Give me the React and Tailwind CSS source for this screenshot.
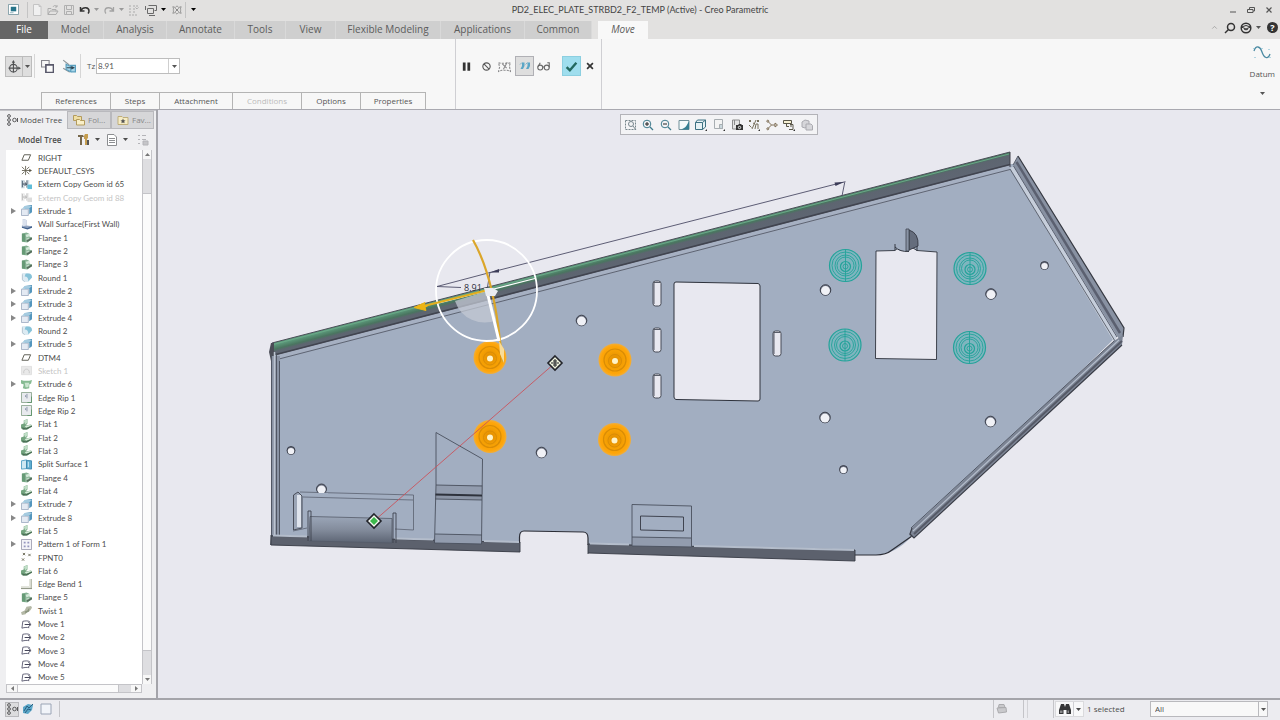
import React, { useState } from 'react';

const MENU = [
    { label: 'Model', width: 'w-[56px]' },
    { label: 'Analysis', width: 'w-[63px]' },
    { label: 'Annotate', width: 'w-[68px]' },
    { label: 'Tools', width: 'w-[51px]' },
    { label: 'View', width: 'w-[50px]' },
    { label: 'Flexible Modeling', width: 'w-[105px]' },
    { label: 'Applications', width: 'w-[84px]' },
    { label: 'Common', width: 'w-[67px]' },
];

const PANELS = [
    { label: 'References', width: 'w-[69px]' },
    { label: 'Steps', width: 'w-[49px]' },
    { label: 'Attachment', width: 'w-[73px]' },
    { label: 'Conditions', width: 'w-[69px]', disabled: true },
    { label: 'Options', width: 'w-[59px]' },
    { label: 'Properties', width: 'w-[66px]' },
];

const TREE = [
    ['plane', 'RIGHT'],
    ['csys', 'DEFAULT_CSYS'],
    ['copy', 'Extern Copy Geom id 65'],
    ['copy', 'Extern Copy Geom id 88', 'off'],
    ['extrude', 'Extrude 1', 'open'],
    ['wall', 'Wall Surface(First Wall)'],
    ['flange', 'Flange 1'],
    ['flange', 'Flange 2'],
    ['flange', 'Flange 3'],
    ['round', 'Round 1'],
    ['extrude', 'Extrude 2', 'open'],
    ['extrude', 'Extrude 3', 'open'],
    ['extrude', 'Extrude 4', 'open'],
    ['round', 'Round 2'],
    ['extrude', 'Extrude 5', 'open'],
    ['plane', 'DTM4'],
    ['sketch', 'Sketch 1', 'off'],
    ['cut', 'Extrude 6', 'open'],
    ['rip', 'Edge Rip 1'],
    ['rip', 'Edge Rip 2'],
    ['flat', 'Flat 1'],
    ['flat', 'Flat 2'],
    ['flat', 'Flat 3'],
    ['split', 'Split Surface 1'],
    ['flange', 'Flange 4'],
    ['flat', 'Flat 4'],
    ['extrude', 'Extrude 7', 'open'],
    ['extrude', 'Extrude 8', 'open'],
    ['flat', 'Flat 5'],
    ['pattern', 'Pattern 1 of Form 1', 'open'],
    ['points', 'FPNT0'],
    ['flat', 'Flat 6'],
    ['bend', 'Edge Bend 1'],
    ['flange', 'Flange 5'],
    ['twist', 'Twist 1'],
    ['move', 'Move 1'],
    ['move', 'Move 2'],
    ['move', 'Move 3'],
    ['move', 'Move 4'],
    ['move', 'Move 5'],
];

// 12x12 glyphs, drawn with the text colour unless a colour is given
const GLYPHS = {
    plane: <path d="M3.500 3h7l-2.500 6h-7z" stroke="#55554a" />,
    csys: (
        <g stroke="#5b5748" strokeWidth="0.900">
            <path d="M5 1v10M1 6h9M1 2l3 3M1 10l3-3M6 5l3-3M6 7l3 3" />
            <path d="M9 4l3 2-3 2z" fill="#5b5748" stroke="none" />
        </g>
    ),
    copy: (
        <g>
            <path d="M0 1h4v9H0zM6 1h3v5H6z" fill="#cfdae2" stroke="none" />
            <path d="M1.500 2v7M6.500 1.500v8" stroke="#46596b" />
            <path d="M2 5.500h4M4 3.500l2 2-2 2" stroke="#28374a" />
            <path d="M7 6h5v5H7z" fill="#5fbcd8" stroke="none" />
        </g>
    ),
    extrude: (
        <g stroke="none">
            <path d="M4 1l8-1v8l-3 2V4H4z" fill="#5496bd" />
            <path d="M.5 4.500h7.500v7H.5z" fill="#e4eaf3" stroke="#a3b0c4" />
            <path d="M1 4l3-3h8L8.500 4z" fill="#a5cbe0" />
        </g>
    ),
    wall: (
        <g stroke="none">
            <path d="M2 0l4 1v6l6 1v1l-5 2-6-2V7h1z" fill="#91a3c0" />
            <path d="M2 0l4 1v6l-4 1z" fill="#dbe2ee" />
            <path d="M1 8.500l6 1.200 5-1.700v1.500L7 11.500l-6-2z" fill="#41618c" />
        </g>
    ),
    flange: (
        <g stroke="none">
            <path d="M1 1.500L6 .5 9 2v3l3 1v2l-5 3.500-6-1z" fill="#87b294" />
            <path d="M1 2h3.500v8.500L1 10z" fill="#669a76" />
            <path d="M5 3l4-1v2.500L6 6z" fill="#d2e8d8" />
            <path d="M6 8.500L12 6v2l-5 3z" fill="#566d5d" />
            <path d="M5.500 7l3.500-1v1.500L6 8.700z" fill="#bcd9c4" />
        </g>
    ),
    round: (
        <g stroke="none">
            <path d="M1 1h6c4 0 5 2 5 5l-4 5H4L1 9z" fill="#dcebf3" />
            <path d="M5 2c5-1 7 1 7 4L8 10c0-3-1-5-4-5z" fill="#86c2d8" />
            <path d="M1.500 2.500v6L4 10.500" stroke="#b5c3ce" />
        </g>
    ),
    sketch: (
        <g>
            <path d="M.5 1.500h11v9H.5z" fill="#c9c9cc" stroke="#b0b0b4" />
            <path d="M3 9c-1-6 7-6 6 0" stroke="#777" />
        </g>
    ),
    cut: (
        <g stroke="none">
            <path d="M0 1l3 1h6l3-1-1 4-2 1v4l-4 1-3-1 1-4-3-1z" fill="#86ba92" />
            <path d="M4 4h5L8 9H5z" fill="#cbe5d0" />
        </g>
    ),
    rip: (
        <g>
            <path d="M.5.500h11v11H.5z" fill="#e8eaee" stroke="#8ea692" />
            <path d="M6.500 2v5M5 3.500v2" stroke="#8791a4" />
            <path d="M11.500 5v6.500H7" stroke="#5d9468" />
        </g>
    ),
    flat: (
        <g stroke="none">
            <path d="M3 1.500L7 0v5L5 7l6-1 1 2-5 3.500H2L0 10V6l3-1z" fill="#73a47f" />
            <path d="M3 2l4-2v4L4.500 6z" fill="#c0dec7" />
            <path d="M4 8l5-1.500L12 7 6 9.500z" fill="#d6ead9" />
            <path d="M1 9l4 1 7-3v1.500L6 11.500H2z" fill="#4b6e56" />
        </g>
    ),
    split: (
        <g>
            <path d="M.5 2L6 1v9.500L.5 11z" fill="#cfe8f2" stroke="#52a0c4" />
            <path d="M6 1.500l5.500.5v9L6 10.500z" fill="#5faed0" stroke="#3c88b0" />
            <path d="M8 3v6" stroke="#d8eef7" />
        </g>
    ),
    pattern: (
        <g>
            <path d="M.5.500h11v11H.5z" fill="#f4f4f8" stroke="#a0a0b2" />
            <path d="M3 3h2v2H3zM7 3h2v2H7zM3 7h2v2H3zM7 7h2v2H7z" fill="#9595be" stroke="none" />
        </g>
    ),
    points: <path d="M2 1l2.500 2.500M4.500 1L2 3.500M8 2l2.500 2.500M10.500 2L8 4.500M1 7l2.500 2.500M3.500 7L1 9.500" stroke="#6b6a55" />,
    bend: (
        <g stroke="none">
            <path d="M9 0h3v11H0V8h9z" fill="#b9bdb0" />
            <path d="M9 0h1.500v9.500H0V8h9z" fill="#ecede6" />
            <path d="M0 10h12v1H0z" fill="#8d9382" />
        </g>
    ),
    twist: (
        <g stroke="none">
            <path d="M0 8l4-2 2-4 5-1 1 2-2 3-3 1-2 3-4 1z" fill="#b4b8a6" />
            <path d="M4 7l3-1 2-3v4L5 9z" fill="#8b957f" />
        </g>
    ),
    move: (
        <g stroke="#5c5c72">
            <path d="M10 3.500C8 1.500 5 2 2 2.500L1 10c3-1 6-1 8-.5" />
            <path d="M4 6h6M8 3.500L11 6 8 8.500" stroke="#33334a" />
        </g>
    ),
    branch: (
        <g stroke="#5a5a5c">
            <circle cx="3" cy="2" r="1.400" />
            <circle cx="3" cy="6" r="1.400" />
            <circle cx="3" cy="10" r="1.400" />
            <circle cx="8.500" cy="6" r="1.800" />
            <path d="M11.500 4v4" />
        </g>
    ),
    folders: (
        <g stroke="#b39b5c">
            <path d="M.5 1.500h3l1 1h4v4h-8z" fill="#f0dfa4" />
            <path d="M3.500 5.500h3l1 1h4v4.500h-8z" fill="#f9efc8" />
        </g>
    ),
    favs: (
        <g>
            <path d="M1 2.500h4l1 1h5v7H1z" fill="#f6ecc4" stroke="#bfae7a" />
            <path d="M6 4.500l.8 1.700 1.700.2-1.300 1.100.4 1.700L6 8.400l-1.600.8.4-1.700-1.300-1.100 1.700-.2z" fill="#555" stroke="none" />
        </g>
    ),
    tools: (
        <g stroke="none">
            <path d="M0 1h5l1 2H4v8H2V3H0z" fill="#77674a" />
            <path d="M7 0h3v4l-1 1v6H7V5H6V2z" fill="#c59d4e" />
            <path d="M9 6h2v5H9z" fill="#555" />
        </g>
    ),
    page: (
        <g stroke="#8b8d90">
            <path d="M1.500.500H8l2.500 2.500v8.500h-9z" fill="#fff" />
            <path d="M3 4.500h6M3 6.500h6M3 8.500h6" />
        </g>
    ),
    filter: (
        <g stroke="#b4b4b8">
            <path d="M1 1.500h2M1 5.500h2M1 9.500h2M5 1.500h4M5 5.500h4" />
            <path d="M6 7h5v4H6z" fill="#c5c5c8" />
        </g>
    ),
    app: (
        <g>
            <path d="M.5.500h11v11H.5z" fill="#fff" stroke="#7d9aa3" />
            <path d="M3 3h6v5H3z" fill="#26748a" stroke="none" />
            <path d="M2 9.500h4" stroke="#8fb4bd" />
        </g>
    ),
    fileNew: <path d="M2.500.500H8l2 2v9H2.500zM8 .5v2h2" stroke="#c4c4c4" fill="#f0f0f0" />,
    folderOpen: <path d="M1 10.500v-6h3l1 1h4v2M1 10.500l2-3.500h8l-2 3.500zM6 3c1-2 3-2 4 0M10 1v2H8" stroke="#adadad" />,
    save: <path d="M1.500 1.500h9v9h-9zM3.500 1.500v4h5v-4M3.500 10.500v-3h5v3" stroke="#b0b0b0" />,
    undo: <path d="M1.500 3v4h4M2 6.500C4 2.500 10 3 10 7c0 1-.5 2-1 2.500" stroke="#333" strokeWidth="1.500" />,
    redo: <path d="M10.500 3v4h-4M10 6.500C8 2.500 2 3 2 7c0 1 .5 2 1 2.500" stroke="#a3a3a3" strokeWidth="1.300" />,
    regen: <path d="M1 2h3M1 5h3M1 8h3M1 11h9M6 1v8M9 1v4M7.500 3.500L9 5l1.500-1.500" stroke="#aaa" strokeDasharray="2 1" />,
    windows: <path d="M3.500 1.500h8v5h-2M2.500 4.500h6v5h-6zM.5 2v4M4 11.500h6" stroke="#6a6a6a" />,
    closeWin: (
        <g stroke="#777">
            <path d="M4 4l4 4M8 4L4 8" />
            <path d="M1 2l3 1 2-2 2 2 3-1-1 3 1 1-1 1 1 3-3-1-2 2-2-2-3 1 1-3-1-1 1-1z" strokeWidth="0.800" />
        </g>
    ),
    dragger: (
        <g stroke="#4f5052">
            <circle cx="5" cy="7.500" r="3.500" />
            <path d="M5 1v10.500M.5 7.500H10" />
            <path d="M3.500 2.500L5 0l1.500 2.500zM9.500 6l2.500 1.500L9.500 9z" fill="#4f5052" stroke="none" />
        </g>
    ),
    squares: (
        <g stroke="#58586a">
            <path d="M.5.500h7v6h-7z" stroke="#85858c" />
            <path d="M4.500 4.500h7v7h-7z" fill="#fafafa" strokeWidth="1.500" />
        </g>
    ),
    copyFaces: (
        <g>
            <path d="M1 1l5 4v6L1 8" stroke="#8d9498" />
            <path d="M3.500 4.500l4 2v4.500l-4-2zM7.500 5.500h4v5.500h-4z" fill="#a7d6ea" stroke="#5a9fbe" />
            <path d="M4 7.500h5M8 6.500l2 1-2 1" stroke="#2f4552" />
        </g>
    ),
    pause: <path d="M2 1.500h3v9H2zM7 1.500h3v9H7z" fill="#333" stroke="none" />,
    none: (
        <g stroke="#555" strokeWidth="1.200">
            <circle cx="6" cy="6" r="4" />
            <path d="M3.200 3.200l5.600 5.600" />
        </g>
    ),
    verify: (
        <g stroke="#8a8a8c">
            <path d="M.5 2.500l2 .5h7l2-.5-1 3 1 5-3-1h-5l-3 1 1-4z" strokeDasharray="2 1" />
            <path d="M4 3.500l4 4M8.500 2L5 8.500" />
        </g>
    ),
    attach: (
        <g>
            <path d="M3 2.500h2.500V6L4 9H1.500L3 6zM8.500 2.500H11V6L9.500 9H7l1.500-3z" fill="#5ba6c6" stroke="none" />
            <path d="M1 4.500l2-2M6.500 4.500l2-2" stroke="#7db4cc" />
        </g>
    ),
    glasses: (
        <g stroke="#666">
            <circle cx="3" cy="7" r="2.300" />
            <circle cx="9" cy="7" r="2.300" />
            <path d="M1 6l2-3.500M5.300 6.500h1.400M11.300 7V2.500H9.500" />
        </g>
    ),
    check: <path d="M1.500 6.500L4.500 9.500 10.500 2.500" stroke="#23695f" strokeWidth="2.200" />,
    cross: <path d="M2.500 2.500l7 7M9.500 2.500l-7 7" stroke="#333" strokeWidth="2" />,
    refit: (
        <g stroke="#77868c">
            <path d="M.5 1.500h10v9H.5z" strokeDasharray="2 1" />
            <circle cx="6" cy="5" r="2.500" />
            <path d="M8 7l3 4" />
        </g>
    ),
    zoomIn: (
        <g stroke="#3f7b8d">
            <circle cx="5" cy="5" r="3.800" />
            <path d="M3 5h4M5 3v4" stroke="#222" />
            <path d="M8 8l3 3" strokeWidth="1.300" />
        </g>
    ),
    zoomOut: (
        <g stroke="#3f7b8d">
            <circle cx="5" cy="5" r="3.800" />
            <path d="M3 5h4" stroke="#222" />
            <path d="M8 8l3 3" strokeWidth="1.300" />
        </g>
    ),
    repaint: (
        <g>
            <path d="M1 1.500h10v9H1z" fill="#f4fafb" stroke="#6f8f99" />
            <path d="M11 2v8.500H3C8 9 9 6 11 2z" fill="#357f92" stroke="none" />
        </g>
    ),
    shade: (
        <g stroke="#3d7182">
            <path d="M.5 3.500h7v7h-7zM.5 3.500l2-2.500h8v7l-3 2.500M7.500 3.500L10.500 1" fill="#e6f1f4" />
            <path d="M12 10v2h-2z" fill="#333" stroke="none" />
        </g>
    ),
    views: (
        <g stroke="#a7adb1">
            <path d="M1.500.500h8v9h-8z" fill="#f3f3f3" />
            <path d="M6.500 5.500h3v4h-3z" fill="#c9d6db" />
            <path d="M12 10v2h-2z" fill="#333" stroke="none" />
        </g>
    ),
    camera: (
        <g>
            <path d="M1.500 1h7v9h-7z" fill="#e4e4e4" stroke="#8c8c8c" />
            <path d="M3.500 1v5" stroke="#8c8c8c" />
            <path d="M5 6h2l1-1h2l1 1h1v5H5z" fill="#333" stroke="none" />
            <circle cx="8.500" cy="8.500" r="1.200" stroke="#eee" />
        </g>
    ),
    datums: (
        <g stroke="#77705c">
            <path d="M1 1l2 2M3 1L1 3M4 10l4-9M9 1l2 2M11 1L9 3M1 6l2.500 2.500M7 10l1-5h2v5M5 4l2 1" />
            <path d="M12 10v2h-2z" fill="#333" stroke="none" />
        </g>
    ),
    annot: (
        <g stroke="#7f6f56">
            <path d="M2 2.500L5.500 6 2 9.500M5.500 6H9" />
            <path d="M9 4l2.500 2L9 8z" />
            <circle cx="1.800" cy="2.200" r="1" />
            <circle cx="1.800" cy="9.800" r="1" />
        </g>
    ),
    spin: (
        <g stroke="#5a5748">
            <path d="M.5 1.500h8v3h-8zM3.500 4.500v3H6" fill="#f6f0d2" />
            <path d="M7 5.500h3v5H6M8 4v4" />
            <path d="M12 10v2h-2z" fill="#333" stroke="none" />
        </g>
    ),
    ghost: (
        <g fill="#d6d6da" stroke="#aaaab0">
            <path d="M1 3l3-2 4 1v5L4 9 1 8z" />
            <path d="M5 5h5l1.500 1.500V11H5z" />
        </g>
    ),
    globe: (
        <g stroke="none">
            <path d="M1 4l5-3 5 1-1 5-4 4-5-1z" fill="#5aa6c8" />
            <path d="M2 8l3-5 2 2 4-4M3 10l3-4 3 1" stroke="#295f80" />
        </g>
    ),
    box: <path d="M1 1h10v10H1z" fill="#f1f4f9" stroke="#9aa4b5" />,
    print: <path d="M3 1.500h5l1 3H2.500zM1 5l9-.5.5 4.500-8 1z" fill="#c9c9cc" stroke="#ababae" />,
    binoculars: (
        <g stroke="none">
            <path d="M2 1h3l1 3 1-3h3l2 6v4H7.500V7h-3v4H0V7z" fill="#363638" />
            <path d="M1 7.500h2.500v2.500H1zM8.500 7.500H10v2.500H8.500z" fill="#8a8a8c" />
        </g>
    ),
};

function Icon({ name, className = 'size-3' }) {
    return (
        <svg viewBox="0 0 12 12" fill="none" stroke="currentColor" className={`${className} shrink-0`} aria-hidden="true">
            {GLYPHS[name]}
        </svg>
    );
}

function Caret({ className = 'text-[#555]' }) {
    return (
        <svg viewBox="0 0 5 3" className={`h-[3px] w-[5px] shrink-0 ${className}`} aria-hidden="true">
            <path d="M0 0h5L2.500 3z" fill="currentColor" />
        </svg>
    );
}

function IconButton({ name, label, className = '', iconClass }) {
    return (
        <button type="button" aria-label={label} className={`flex items-center justify-center ${className}`}>
            <Icon name={name} className={iconClass} />
        </button>
    );
}

function TitleBar() {
    return (
        <header className="grid h-[21px] grid-cols-[1fr_auto_1fr] items-center bg-[#e2e1e0] pb-[2px]">
            <div className="flex items-center">
                <Icon name="app" className="ml-2 size-[11px]" />
                <span className="ml-2 h-4 w-px bg-[#c4c4c4]" />
                <IconButton name="fileNew" label="New" className="ml-[3px]" />
                <IconButton name="folderOpen" label="Open" className="ml-1" />
                <IconButton name="save" label="Save" className="ml-1" />
                <IconButton name="undo" label="Undo" className="ml-1" />
                <Caret className="ml-[3px] text-[#999]" />
                <IconButton name="redo" label="Redo" className="ml-1" />
                <Caret className="ml-1 text-[#999]" />
                <IconButton name="regen" label="Regenerate" className="ml-1" />
                <IconButton name="windows" label="Windows" className="ml-[5px]" />
                <Caret className="ml-1" />
                <IconButton name="closeWin" label="Close window" className="ml-[6px]" iconClass="size-[10px]" />
                <span className="ml-[3px] h-4 w-px bg-[#c4c4c4]" />
                <Caret className="ml-[5px]" />
            </div>
            <h1 className="font-[Lato,'Noto_Sans',sans-serif] text-[9px] leading-3 text-[#444]">PD2_ELEC_PLATE_STRBD2_F2_TEMP (Active) - Creo Parametric</h1>
            <div className="flex items-center justify-end gap-[10px] pr-[7px] text-[#555]">
                <button type="button" aria-label="Minimize">
                    <svg viewBox="0 0 8 8" className="size-2" stroke="currentColor"><path d="M1 6h6" /></svg>
                </button>
                <button type="button" aria-label="Restore">
                    <svg viewBox="0 0 8 8" className="size-2" fill="none" stroke="currentColor"><path d="M2.500 3V1.500h5V5H6M.5 3.500H6v3H.5z" /></svg>
                </button>
                <button type="button" aria-label="Close">
                    <svg viewBox="0 0 8 8" className="size-2" stroke="currentColor"><path d="M1.500 1.500l5 5M6.500 1.500l-5 5" strokeWidth="1.200" /></svg>
                </button>
            </div>
        </header>
    );
}

function MenuBar() {
    return (
        <nav className="flex h-[18px] items-stretch bg-[#e2e1e0] text-[10px] leading-4 text-[#5c5c5c]">
            <button type="button" className="w-12 bg-[#666] pb-[2px] text-white">File</button>
            <div className="flex bg-[#cfcfcf]">
                {MENU.map((item) => (
                    <button key={item.label} type="button" className={`border-r border-[#d9d9d9] pb-[2px] ${item.width}`}>{item.label}</button>
                ))}
            </div>
            <button type="button" className="ml-[6px] w-[50px] bg-[#f8f8f8] pb-[2px] italic">Move</button>
            <div className="ml-auto flex items-center gap-1 pb-[5px] pr-[2px] text-[#333]">
                <svg viewBox="0 0 8 4" className="h-[3px] w-[7px]" fill="none" stroke="#999"><path d="M1 3.500L4 .5l3 3" /></svg>
                <button type="button" aria-label="Search" className="ml-[2px]">
                    <svg viewBox="0 0 12 12" className="size-3" fill="none" stroke="currentColor" strokeWidth="1.500"><circle cx="7" cy="5" r="3.500" /><path d="M4.500 7.500L1 11" /></svg>
                </button>
                <button type="button" aria-label="Learning">
                    <svg viewBox="0 0 12 12" className="size-3" fill="none" stroke="currentColor" strokeWidth="1.500"><circle cx="6" cy="6" r="4.800" /><path d="M1.500 5L6 3.500 10.500 5 6 7zM4 7c1 1 3 1 4 0" strokeWidth="1" /></svg>
                </button>
                <Caret />
                <button type="button" aria-label="Help" className="ml-[2px] flex size-[11px] items-center justify-center rounded-full bg-[#333] text-[9px] font-bold leading-[10px] text-white">?</button>
            </div>
        </nav>
    );
}

function Ribbon() {
    return (
        <section className="flex h-[71px] border-b border-[#a9a9b0] bg-[#f7f7f7] text-[8px] leading-3 text-[#555]">
            <div className="flex w-[456px] flex-col justify-between border-r border-[#cfcfd3]">
                <div className="flex items-center pl-[5px] pt-[15px]">
                    <button type="button" aria-label="Dragger" className="flex h-[21px] w-[27px] items-center border border-[#bcbcbc] bg-[#dedede]">
                        <span className="flex h-full w-[17px] items-center justify-center border-r border-[#bcbcbc]">
                            <Icon name="dragger" className="size-[13px]" />
                        </span>
                        <Caret className="ml-[2px]" />
                    </button>
                    <span className="ml-[2px] h-6 w-px bg-[#d6d6d6]" />
                    <IconButton name="squares" label="Copy" className="ml-[6px]" iconClass="size-[13px]" />
                    <IconButton name="copyFaces" label="Keep original" className="ml-2" iconClass="size-[14px]" />
                    <span className="ml-1 h-6 w-px bg-[#d6d6d6]" />
                    <label htmlFor="tz" className="ml-[6px] w-[9px]">Tz</label>
                    <div className="flex h-4 w-[84px] border border-[#bdbdbd] bg-white">
                        <input id="tz" defaultValue="8.91" className="min-w-0 flex-1 px-px font-[Lato,'Noto_Sans',sans-serif] text-[8px] outline-none" />
                        <button type="button" aria-label="Recent values" className="flex w-[11px] items-center justify-center border-l border-[#cfcfcf]">
                            <Caret />
                        </button>
                    </div>
                </div>
                <div className="flex pl-[41px]">
                    {PANELS.map((p) => (
                        <button
                            key={p.label}
                            type="button"
                            disabled={p.disabled}
                            className={`h-[17px] border-l border-t border-[#b4b4b4] last:border-r disabled:text-[#bbb] ${p.width}`}
                        >
                            {p.label}
                        </button>
                    ))}
                </div>
            </div>
            <div className="flex w-[146px] items-start border-r border-[#cfcfd3] pl-1 pt-[17px]">
                <IconButton name="pause" label="Pause" className="h-5 w-3" iconClass="size-[11px]" />
                <IconButton name="none" label="No preview" className="ml-2 h-5 w-3" iconClass="size-[11px]" />
                <IconButton name="verify" label="Verify" className="ml-[6px] h-5 w-3" iconClass="size-[13px]" />
                <IconButton name="attach" label="Attached preview" className="ml-[5px] h-5 w-[19px] border border-[#b0b0b5] bg-[#dedede]" />
                <IconButton name="glasses" label="Preview" className="ml-[3px] h-5 w-3" iconClass="size-[13px]" />
                <IconButton name="check" label="Accept" className="ml-[13px] h-5 w-[19px] border border-[#8ccfe0] bg-[#9fdeee]" iconClass="size-[13px]" />
                <IconButton name="cross" label="Cancel" className="ml-[3px] h-5 w-3" iconClass="size-[10px]" />
            </div>
            <button type="button" className="ml-auto mr-[5px] flex flex-col items-center pt-[7px]">
                <svg viewBox="0 0 20 14" className="h-[14px] w-5" fill="none">
                    <path d="M2 5C4-1 8 0 10 6s6 8 8 2" stroke="#4d8ba3" strokeWidth="1.300" />
                    <path d="M2 2v1M17 3v1M3 11v1M10 2v1M18 11v1" stroke="#6db3cc" />
                </svg>
                <span className="mt-2">Datum</span>
                <Caret className="mt-3" />
            </button>
        </section>
    );
}

function TreeRow({ icon, label, state }) {
    return (
        <li className={`flex min-h-0 flex-1 items-center ${state === 'off' ? 'text-[#c4c4c4]' : ''}`}>
            <span className="flex w-[15px] justify-center">
                {state === 'open' && (
                    <button type="button" aria-label={`Expand ${label}`}>
                        <svg viewBox="0 0 5 6" className="h-[6px] w-[5px]"><path d="M0 0l5 3-5 3z" fill="#888" /></svg>
                    </button>
                )}
            </span>
            <Icon name={icon} className={state === 'off' ? 'size-[11px] opacity-40 grayscale' : 'size-[11px]'} />
            <span className="ml-[6px] whitespace-nowrap">{label}</span>
        </li>
    );
}

function Sidebar() {
    return (
        <aside className="flex w-[158px] shrink-0 flex-col border-r-2 border-[#a4a4aa] bg-[#efeff1] text-[8px] leading-3 text-[#4c4c4c]">
            <div className="flex h-[19px] border-t border-[#c4c4c8]">
                <button type="button" className="flex w-[67px] items-center gap-[2px] whitespace-nowrap pl-[6px]">
                    <Icon name="branch" />
                    Model Tree
                </button>
                <button type="button" className="flex w-[44px] items-center gap-[3px] border border-[#b9b9bd] bg-[#d6d6d8] pl-[5px] text-[#888]">
                    <Icon name="folders" />
                    Fol...
                </button>
                <button type="button" className="flex w-[43px] items-center gap-[3px] border border-[#b9b9bd] bg-[#d6d6d8] pl-[5px] text-[#888]">
                    <Icon name="favs" />
                    Fav...
                </button>
            </div>
            <div className="flex h-[21px] items-center pl-[18px]">
                <h2 className="w-[60px] whitespace-nowrap font-semibold">Model Tree</h2>
                <IconButton name="tools" label="Settings" />
                <Caret className="ml-[5px]" />
                <IconButton name="page" label="Show" className="ml-[6px]" />
                <Caret className="ml-[5px]" />
                <IconButton name="filter" label="Filter" className="ml-[9px]" />
            </div>
            <div className="mb-[5px] ml-[6px] mr-1 flex min-h-0 flex-1 flex-col">
                <div className="flex min-h-0 flex-1">
                    <ul className="flex min-w-0 flex-1 flex-col bg-white pt-px font-[Lato,'Noto_Sans',sans-serif]">
                        {TREE.map(([icon, label, state]) => (
                            <TreeRow key={label} icon={icon} label={label} state={state} />
                        ))}
                    </ul>
                    <div className="flex w-[10px] flex-col border-x border-[#c4c4c8] bg-[#dedee1]">
                        <button type="button" aria-label="Scroll up" className="flex h-[9px] items-center justify-center bg-[#f7f7f7]">
                            <Caret className="rotate-180 text-[#777]" />
                        </button>
                        <div className="mb-6 mt-[34px] flex-1 border-y border-[#c4c4c8] bg-[#fbfbfb]" />
                        <button type="button" aria-label="Scroll down" className="flex h-[9px] items-center justify-center bg-[#f7f7f7]">
                            <Caret className="text-[#777]" />
                        </button>
                    </div>
                </div>
                <div className="mr-[10px] flex h-[9px] border border-[#c4c4c8] bg-[#dedee1]">
                    <button type="button" aria-label="Scroll left" className="flex w-[10px] items-center justify-center bg-[#f7f7f7]">
                        <Caret className="rotate-90 text-[#777]" />
                    </button>
                    <div className="mr-3 flex-1 border-x border-[#c4c4c8] bg-[#fbfbfb]" />
                    <button type="button" aria-label="Scroll right" className="flex w-[10px] items-center justify-center bg-[#f7f7f7]">
                        <Caret className="-rotate-90 text-[#777]" />
                    </button>
                </div>
            </div>
        </aside>
    );
}

const HOLES = [
    [291, 450.500, 4], [321.500, 489, 5], [541.500, 452.500, 5.300], [581.500, 320.500, 5.300], [825.500, 290, 5.300],
    [991, 294, 5.300], [1044.500, 265.500, 4], [825, 417.500, 5.300], [990.500, 421.500, 5.300], [843.500, 469.500, 4],
];
const SLOTS = [[653, 281, 25], [653, 328, 24], [653, 374, 24], [773, 331, 25]];
const PICKED = [[490, 357.500], [615, 360], [490, 436.500], [614.500, 439.500]];
const FORMS = [[845.500, 265.500], [970, 268.500], [845, 345], [969.500, 347.500]];

function PlateDrawing() {
    return (
        <svg viewBox="158 110 1122 588" className="absolute inset-0 size-full" fill="none" aria-label="Sheet metal plate">
            <defs>
                <linearGradient id="cyl" x1="0" y1="0" x2="0" y2="1">
                    <stop offset="0" stopColor="#9ba6b8" />
                    <stop offset="0.5" stopColor="#838c9c" />
                    <stop offset="1" stopColor="#5c6473" />
                </linearGradient>
                <linearGradient id="topLip" gradientUnits="userSpaceOnUse" x1="640" y1="247" x2="644" y2="262">
                    <stop offset="0" stopColor="#5c9b7b" />
                    <stop offset="0.3" stopColor="#4a7560" />
                    <stop offset="0.45" stopColor="#5d6570" />
                    <stop offset="1" stopColor="#5f6673" />
                </linearGradient>
                <radialGradient id="pick">
                    <stop offset="0" stopColor="#e08c00" />
                    <stop offset="0.55" stopColor="#f5a004" />
                    <stop offset="0.85" stopColor="#ffa60a" />
                    <stop offset="1" stopColor="#f0ae3c" />
                </radialGradient>
            </defs>

            {/* plate body */}
            <path
                d="M272 350L1010 164 1016 164 1119 334 912 536Q896 554 876 555L855 555 588 545V537Q588 532 584 532L524 531Q520 531 520 536V546L271 538z"
                fill="#a2aec1"
            />
            <path d="M855 555L876 555Q886 555 892 550L912 536" stroke="#2b2d36" strokeWidth="1.200" />
            <path d="M519.500 543V537Q519.500 531 524 531L583 532Q588 532 588 538V545" stroke="#2b2d36" strokeWidth="1.200" />

            {/* top flange */}
            <path d="M276 352L1010 164V171L279 359z" fill="#a6b0c2" />
            <path d="M279 359L1010 169.500" stroke="#4b515e" strokeWidth="0.800" />
            <path d="M272 343L1010 152V165L276 355 270 357z" fill="url(#topLip)" />
            <path d="M272 343L1010 152" stroke="#4a4d57" strokeWidth="1" />
            <path d="M273 344.500L1009 154" stroke="#6aa888" strokeWidth="1" />
            <path d="M276 354.500L1010 164.500" stroke="#41444f" strokeWidth="1.600" />
            <path d="M1010 152v15" stroke="#3e3f49" />
            <path d="M271 343l-2 9 2 9 3-2v-16z" fill="#4a4d57" />

            {/* left flange */}
            <path d="M271 356h9v181l-9-1z" fill="#8a93a4" />
            <path d="M274.500 352v184" stroke="#bcc4d0" strokeWidth="1.500" />
            <path d="M271.500 355v182M276.500 353v182M279.500 361v175" stroke="#4a4f5b" strokeWidth="0.900" />

            {/* right flange */}
            <path d="M1010 168L1016 165 1119 334 1114 342z" fill="#c6cedb" />
            <path d="M1018 156L1124 328 1123 337 1119 339 1013 165z" fill="#8891a2" />
            <path d="M1013.500 166L1117 337" stroke="#5a6070" />
            <path d="M1016.500 162L1120 333" stroke="#5b6070" strokeWidth="2.500" />
            <path d="M1018 156L1124 328 1123 337" stroke="#363942" strokeWidth="1.200" />
            <path d="M1018 156L1013 165M1010 169L1115 341" stroke="#565b68" strokeWidth="0.900" />

            {/* lower right flange */}
            <path d="M1114 341L1123 335 1122 345 914 538 909 535 912 528z" fill="#7d8595" />
            <path d="M1114 341L911 528" stroke="#4a4f5b" strokeWidth="0.900" />
            <path d="M1119 340L913 531" stroke="#b4bdcb" strokeWidth="1.200" />
            <path d="M1122 345L914 538 910 534 912 528" stroke="#3b3e48" strokeWidth="1.200" />
            <path d="M1122 341L914 534" stroke="#565a67" strokeWidth="2" />

            {/* bottom flanges */}
            <path d="M271 535L520 543V552L270 545z" fill="#5c616d" />
            <path d="M271 545L520 552M271 536L520 542.500M520 542v10M271 535v10" stroke="#373a44" strokeWidth="0.900" />
            <path d="M588 544L855 550V561L588 553z" fill="#5c616d" />
            <path d="M588 553L855 561M588 544L855 550M588 544v10M855 550v11" stroke="#373a44" strokeWidth="0.900" />
            <path d="M273 535.500l34 1M395 538.500l38 1M484 541l35 1M590 543.500l39 1M694 546l160 4" stroke="#b4bdcb" strokeWidth="2" />

            {/* hinge on the left */}
            <path d="M293.500 495l4.500-3 4 4v32l-8.500 2z" fill="#9ba5b6" stroke="#3f434e" strokeWidth="0.900" />
            <path d="M297 495h4v32h-4z" fill="#dfe4ed" />
            <path d="M300 492L413.500 495V530L395 529M303 497L413 500M293 531l14-3" stroke="#5b6170" strokeWidth="0.800" />
            <path d="M310 516.500L392 518.500V543L309 541z" fill="url(#cyl)" stroke="#545a68" strokeWidth="0.800" />
            <path d="M308 541v-30h3v30M393 543v-30h3v30" stroke="#3f434e" strokeWidth="0.900" />

            {/* bracket in the middle */}
            <path d="M435 494L482 495 482 500 435 499z" fill="#8b94a5" />
            <path d="M436 485h47v9h-47z" fill="#929cae" />
            <path d="M435 534l47 1v9l-47-1z" fill="#929cae" />
            <path d="M436 485V432.500L482.500 459 481.500 544 434.500 543 436 485L482 486M435 499L482 500M435 534L482 535" stroke="#4a505d" strokeWidth="0.900" />
            <path d="M435.500 494.500l46.500 1" stroke="#2e323c" strokeWidth="2" />

            {/* slotted bracket */}
            <path d="M632 537l60 1v9l-60-1z" fill="#929cae" />
            <path d="M632 546V504.500L691.500 506V547zM632 537L691 538" stroke="#4a505d" strokeWidth="0.900" />
            <path d="M640.500 516L683.500 517V531L640.500 530z" stroke="#343843" strokeWidth="0.900" />

            {/* cut-outs */}
            <path d="M676 282L758 283.500Q760 284 760 286V399Q760 401 758 401L676 399.500Q674 399 674 397V284Q674 282 676 282z" fill="#e8e8f0" stroke="#2e323c" />
            <path d="M876 251L895 250.500 898 248H913L917 250.500 937 252 936.500 359.500 875.500 358.500z" fill="#e8e8f0" stroke="#2e323c" strokeWidth="0.900" />
            <path d="M895 244l3 3h8v4l-6 0-5-3z" fill="#a2aec1" />
            <path d="M895 250v-6M895 247Q900 252 909 251.500M917 251v-5" stroke="#343843" />
            <path d="M909 230Q919 233 918 246L909 250z" fill="#656d7d" stroke="#343843" strokeWidth="0.900" />
            <path d="M906 229h3v22h-3z" fill="#8993a4" stroke="#3f4450" strokeWidth="0.800" />
            {SLOTS.map(([x, y, h]) => (
                <g key={`${x}-${y}`}>
                    <rect x={x} y={y} width="8" height={h} rx="2.500" fill="#e8e8f0" stroke="#3b3f4a" strokeWidth="0.900" />
                    <path d={`M${x + 1} ${y + h - 2}V${y + 1.500}h6`} stroke="#4a4f5b" strokeWidth="0.900" />
                </g>
            ))}
            {HOLES.map(([cx, cy, r]) => (
                <g key={`${cx}-${cy}`}>
                    <circle cx={cx} cy={cy} r={r} fill="#6a7080" stroke="#343843" strokeWidth="0.900" />
                    <circle cx={cx} cy={cy + 0.6} r={r - 0.8} fill="#f0f1f6" />
                </g>
            ))}
            <path d="M315 493h13v3h-13z" fill="#a2aec1" />

            {FORMS.map(([cx, cy]) => (
                <g key={`${cx}-${cy}`} stroke="#23a39a" strokeWidth="0.900">
                    <circle cx={cx} cy={cy} r="16" fill="#7fb5bf" strokeWidth="1.200" />
                    <circle cx={cx} cy={cy} r="13.500" />
                    <circle cx={cx} cy={cy} r="10.500" />
                    <circle cx={cx} cy={cy} r="8.500" />
                    <circle cx={cx} cy={cy + 1} r="5" strokeWidth="1.200" />
                    <circle cx={cx} cy={cy + 1} r="2.500" />
                    <path d={`M${cx} ${cy - 16}v32`} />
                </g>
            ))}
            {PICKED.map(([cx, cy]) => (
                <g key={`${cx}-${cy}`}>
                    <circle cx={cx} cy={cy} r="16.500" fill="url(#pick)" />
                    <circle cx={cx} cy={cy} r="11" stroke="#d98c06" strokeWidth="1.200" />
                    <circle cx={cx} cy={cy + 1} r="6.500" stroke="#d98c06" />
                    <circle cx={cx} cy={cy + 1} r="3" fill="#fff3c8" />
                </g>
            ))}

            {/* dimension */}
            <path d="M437 286.500L490 272.500 844 182M845 181l-3 15M490 272l-3 18M437 286.500l24 1" stroke="#4d4d66" strokeWidth="0.900" />
            <path d="M490 272.500l9-3.500v3.500zM844 182l-9.500.500 1 3.500z" fill="#3c3c58" />

            {/* dragger */}
            <path d="M455 301a31 31 0 0042 19L487 291z" fill="#c3c8d3" opacity="0.750" />
            <circle cx="486.500" cy="290.500" r="50.500" stroke="#fff" strokeWidth="1.800" />
            <path d="M473 240Q493 275 500 341L503 362" stroke="#dba62a" strokeWidth="2.200" />
            <path d="M437 303.500L535 278.500" stroke="#fff" strokeWidth="1.200" />
            <path d="M488 290L424 306" stroke="#e3ae1e" strokeWidth="2" />
            <path d="M414 307.500l11-5-1 3 4 0-3 2 1 3z" fill="#edb414" stroke="#edb414" />
            <path d="M487 291L499 341" stroke="#fff" strokeWidth="3" />
            <path d="M499 341l5 8v14l-4-9z" fill="#f9dc98" />
            <path d="M484 288h9l5 3-3 5h-9z" fill="#e9ebf0" />
            <text x="464" y="291" fill="#30303c" className="font-['Open_Sans',sans-serif] text-[9px]">8.91</text>

            {/* drag handles */}
            <path d="M555 363L374 521" stroke="#c9535c" strokeWidth="0.900" />
            <path d="M555 356l7 7-7 7-7-7z" fill="#eef2dd" stroke="#22242a" strokeWidth="1.600" />
            <path d="M555 359v8M551 363h8M553 361h4M553 365h4" stroke="#22242a" />
            <path d="M374 514l7 7-7 7-7-7z" fill="#f4f7f0" stroke="#22242a" strokeWidth="1.600" />
            <path d="M374 517l4 4-4 4-4-4z" fill="#3cb94c" />
        </svg>
    );
}

const VIEW_TOOLS = [
    ['refit', 'Refit'],
    ['zoomIn', 'Zoom in'],
    ['zoomOut', 'Zoom out'],
    ['repaint', 'Repaint'],
    ['shade', 'Display style'],
    ['views', 'Saved orientations'],
    ['camera', 'View manager'],
    ['datums', 'Datum display'],
    ['annot', 'Annotation display'],
    ['spin', 'Spin center'],
    ['ghost', 'Simulate'],
];

function Viewport() {
    return (
        <main className="relative min-w-0 flex-1 bg-[#e8e8ef]">
            <PlateDrawing />
            <div className="absolute left-1/2 top-1 flex h-[21px] w-[198px] -translate-x-1/2 items-center justify-around border border-[#b3b3b8] bg-[#f3f3f5] px-px">
                {VIEW_TOOLS.map(([name, label]) => (
                    <IconButton key={name} name={name} label={label} />
                ))}
            </div>
        </main>
    );
}

function StatusBar() {
    const [filter, setFilter] = useState('All');

    return (
        <footer className="flex h-[22px] items-center border-t-2 border-[#a4a4aa] bg-[#ececf0] pb-[2px] text-[8px] leading-3 text-[#4c4c4c]">
            <IconButton name="branch" label="Navigator" className="ml-[5px] h-[15px] w-[14px] border border-[#b9b9bd] bg-[#dcdcde]" />
            <IconButton name="globe" label="Browser" className="ml-[3px]" />
            <IconButton name="box" label="Full screen" className="ml-[6px]" />
            <span className="ml-[7px] h-4 w-px bg-[#c4c4c8]" />
            <div className="ml-auto flex items-center">
                <span className="h-[18px] w-px bg-[#c4c4c8]" />
                <IconButton name="print" label="Messages" className="ml-[2px]" />
                <span className="ml-[15px] h-[18px] w-px bg-[#c4c4c8]" />
                <span className="ml-[3px] h-[18px] w-px bg-[#d2d2d6]" />
                <span className="ml-[25px] h-[18px] w-px bg-[#c4c4c8]" />
                <button type="button" aria-label="Find" className="ml-px flex h-4 w-[29px] items-center border border-[#dadadd] bg-[#f8f8f9]">
                    <span className="flex h-full w-[18px] items-center justify-center border-r border-[#cfcfd3]">
                        <Icon name="binoculars" />
                    </span>
                    <Caret className="ml-[2px]" />
                </button>
                <span className="ml-[3px] w-[63px]">1 selected</span>
                <div className="relative mr-3 w-[118px]">
                    <select
                        aria-label="Selection filter"
                        value={filter}
                        onChange={(e) => setFilter(e.target.value)}
                        className="block h-4 w-full appearance-none border border-[#b9b9bd] bg-[#f8f8f8] pl-1 text-[8px] outline-none"
                    >
                        <option>All</option>
                        <option>Geometry</option>
                        <option>Feature</option>
                    </select>
                    <span className="pointer-events-none absolute inset-y-px right-px flex w-[9px] items-center justify-center border-l border-[#b9b9bd]">
                        <Caret />
                    </span>
                </div>
            </div>
        </footer>
    );
}

export default function App() {
    return (
        <div className="flex h-screen flex-col overflow-hidden font-['Open_Sans','Noto_Sans',sans-serif]">
            <TitleBar />
            <MenuBar />
            <Ribbon />
            <div className="flex min-h-0 flex-1">
                <Sidebar />
                <Viewport />
            </div>
            <StatusBar />
        </div>
    );
}
